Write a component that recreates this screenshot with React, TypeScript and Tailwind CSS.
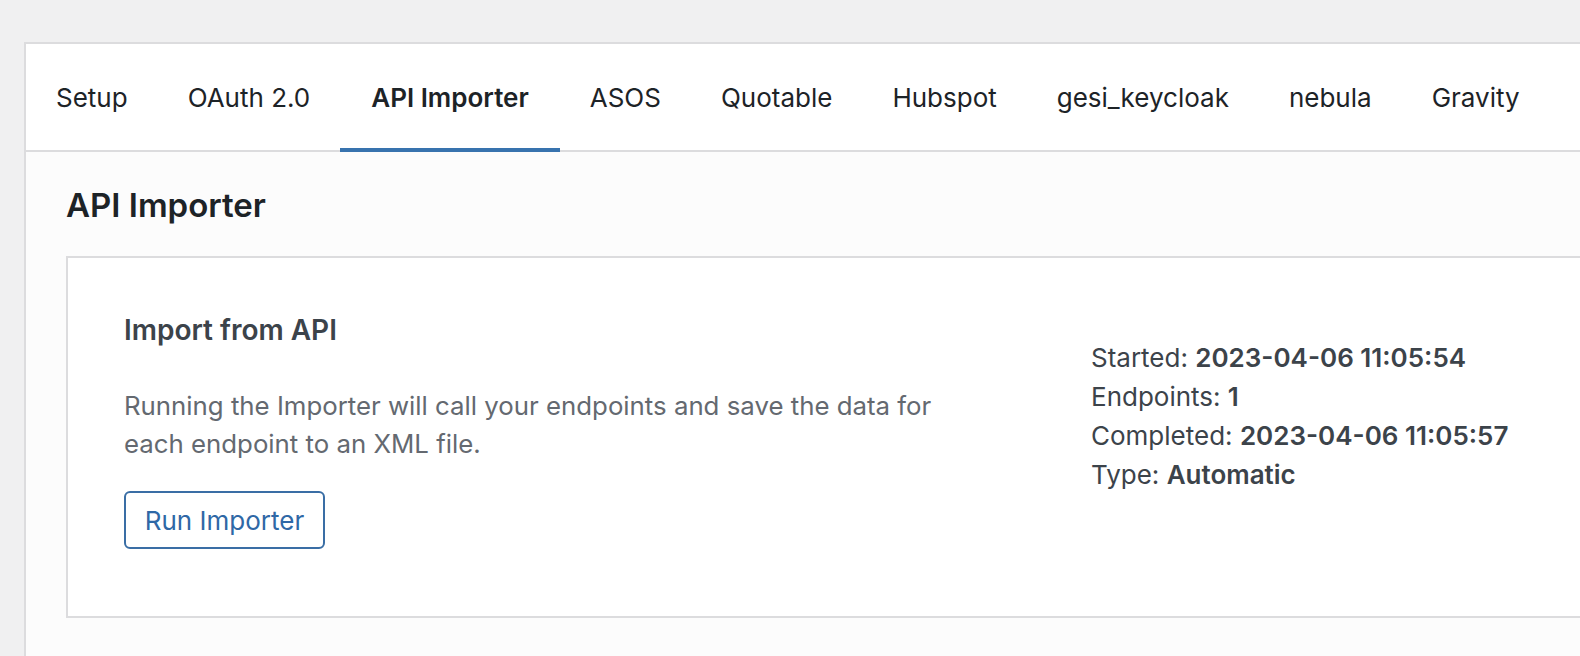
const tabs = ['Setup', 'OAuth 2.0', 'API Importer', 'ASOS', 'Quotable', 'Hubspot', 'gesi_keycloak', 'nebula', 'Gravity'];

export default function App() {
  const active = 'API Importer';

  return (
    <div
      className="min-h-[656px] bg-[#f0f0f1] pt-[42px] pl-[24px] overflow-hidden"
      style={{ fontFamily: 'Inter, "Noto Sans", sans-serif' }}
    >
      <div className="border-t-2 border-l-2 border-[#dcdcde] bg-[#fcfcfc] min-h-[614px]">
        <nav className="flex items-start h-[108px] bg-white border-b-2 border-[#dcdcde]">
          {tabs.map((t) => (
            <a
              key={t}
              className={`flex items-center h-[108px] pt-[2px] px-[30px] text-[26px] border-b-4 ${
                t === active
                  ? 'font-semibold text-[#1d2327] border-[#3873ae] px-[31px]'
                  : 'text-[#1d2327] border-transparent'
              }`}
            >
              {t}
            </a>
          ))}
        </nav>

        <div className="pl-[40px] pt-[33px]">
          <h1 className="text-[33px] font-semibold text-[#1d2327] leading-[40px]">
            API Importer
          </h1>

          <div className="mt-[31px] bg-white border-2 border-r-0 border-[#dcdcde] h-[362px] flex">
            <div className="pl-[56px] pt-[54px] w-[1023px] shrink-0">
              <h2 className="text-[28px] font-semibold text-[#3c434a] leading-[36px]">Import from API</h2>
              <p className="mt-[39px] text-[25.8px] text-[#646970] leading-[38px] w-[860px]">
                Running the Importer will call your endpoints and save the data for each endpoint to an XML file.
              </p>
              <button className="mt-[28px] h-[58px] w-[201px] border-2 border-[#3a6ea5] rounded-[6px] text-[26px] text-[#2f68a6]">
                Run Importer
              </button>
            </div>
            <div className="pt-[80px] text-[26px] text-[#3c434a] leading-[39px] whitespace-nowrap">
              <div>Started: <b className="font-semibold">2023-04-06 11:05:54</b></div>
              <div>Endpoints: <b className="font-semibold">1</b></div>
              <div>Completed: <b className="font-semibold">2023-04-06 11:05:57</b></div>
              <div>Type: <b className="font-semibold">Automatic</b></div>
            </div>
          </div>
        </div>
      </div>
    </div>
  );
}
